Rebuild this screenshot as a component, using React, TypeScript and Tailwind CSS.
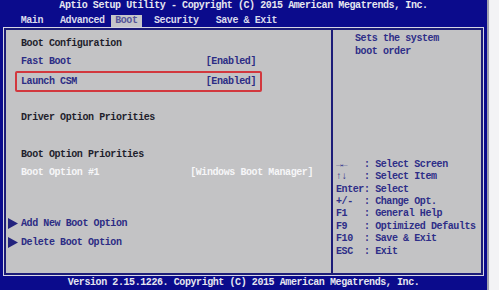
import React from "react";

const mono = { fontFamily: '"Liberation Mono", "DejaVu Sans Mono", monospace' };

const tabs = [
  { label: "Main", ml: "ml-[20.7px]" },
  { label: "Advanced", ml: "ml-[17px]" },
  { label: "Boot", ml: "ml-[6.5px]", active: true },
  { label: "Security", ml: "ml-[12.5px]" },
  { label: "Save & Exit", ml: "ml-[17px]" },
];

const keys = [
  ["→←", "Select Screen"],
  ["↑↓", "Select Item"],
  ["Enter", "Select"],
  ["+/-", "Change Opt."],
  ["F1", "General Help"],
  ["F9", "Optimized Defaults"],
  ["F10", "Save & Exit"],
  ["ESC", "Exit"],
];

function Tri() {
  return (
    <svg width="10" height="11" viewBox="0 0 10 11" className="ml-[2px] shrink-0">
      <path d="M0 0 L10 5.5 L0 11 Z" fill="#23237e" />
    </svg>
  );
}

export default function App() {
  return (
    <div
      className="w-[499px] h-[290px] flex bg-[#f3f3f5] font-bold text-[10px] tracking-[-0.42px] overflow-hidden"
      style={mono}
    >
      <div className="w-[487px] h-full bg-[#0b0b8c] flex flex-col">
        {/* Title */}
        <div className="h-[12px] leading-[12px] text-center text-[#e6e6f0] whitespace-pre">
          Aptio Setup Utility - Copyright (C) 2015 American Megatrends, Inc.
        </div>

        {/* Tabs */}
        <div className="h-[15px] flex text-[#dadaec] whitespace-pre">
          {tabs.map((t) =>
            t.active ? (
              <span
                key={t.label}
                className={`${t.ml} mt-[3px] h-[12px] leading-[11px] px-[4px] bg-[#c6c6ca] text-[#55559a]`}
              >
                {t.label}
              </span>
            ) : (
              <span key={t.label} className={`${t.ml} mt-[3px] h-[12px] leading-[11px]`}>
                {t.label}
              </span>
            )
          )}
        </div>

        {/* Body */}
        <div className="mx-[3px] h-[249px] border border-[#d6d6e4]">
          <div className="h-full border-2 border-[#1c1c78] bg-[#c3c3c5] flex">
            {/* Left panel */}
            <div className="w-[325px] flex flex-col pt-[5px] text-[#2c2c84] whitespace-pre">
              <div className="pl-[15px] h-[18px] leading-[18px] text-[#1e1e2c]">Boot Configuration</div>
              <div className="ml-[9px] w-[247px] h-[17.5px] leading-[14px] border-2 border-transparent px-[4px] flex justify-between">
                <span>Fast Boot</span>
                <span>[Enabled]</span>
              </div>
              <div className="ml-[9px] w-[247px] h-[21px] leading-[17px] border-2 border-[#d2383e] rounded-[2px] px-[4px] flex justify-between">
                <span>Launch CSM</span>
                <span>[Enabled]</span>
              </div>
              <div className="mt-[17px] pl-[15px] h-[18px] leading-[18px] text-[#1e1e2c]">Driver Option Priorities</div>
              <div className="mt-[19px] pl-[15px] h-[18px] leading-[18px] text-[#1e1e2c]">Boot Option Priorities</div>
              <div className="ml-[9px] w-[304px] h-[18px] leading-[18px] px-[6px] flex justify-between text-[#f6f6f8]">
                <span>Boot Option #1</span>
                <span>[Windows Boot Manager]</span>
              </div>
              <div className="mt-[33px] h-[18px] flex items-center">
                <Tri />
                <span className="ml-[3px]">Add New Boot Option</span>
              </div>
              <div className="mt-[0.5px] h-[18.5px] flex items-center">
                <Tri />
                <span className="ml-[3px]">Delete Boot Option</span>
              </div>
            </div>

            {/* Right panel */}
            <div className="flex-1 border-l-2 border-[#1c1c78] flex flex-col text-[#2e2e88] whitespace-pre">
              <div className="pl-[22px] pt-[3px] leading-[12.6px]">
                <div>Sets the system</div>
                <div>boot order</div>
              </div>
              <div className="mt-auto pb-[15px] pl-[3px] leading-[12.4px]">
                {keys.map(([k, d]) => (
                  <div key={k} className="flex">
                    <span className="w-[28px]">{k}</span>
                    <span>: {d}</span>
                  </div>
                ))}
              </div>
            </div>
          </div>
        </div>

        {/* Footer */}
        <div className="h-[14px] leading-[14px] text-center text-[#e6e6f0] whitespace-pre">
          Version 2.15.1226. Copyright (C) 2015 American Megatrends, Inc.
        </div>
      </div>
      <div className="w-[1.5px] h-full bg-[#a4a4b0]" />
    </div>
  );
}
